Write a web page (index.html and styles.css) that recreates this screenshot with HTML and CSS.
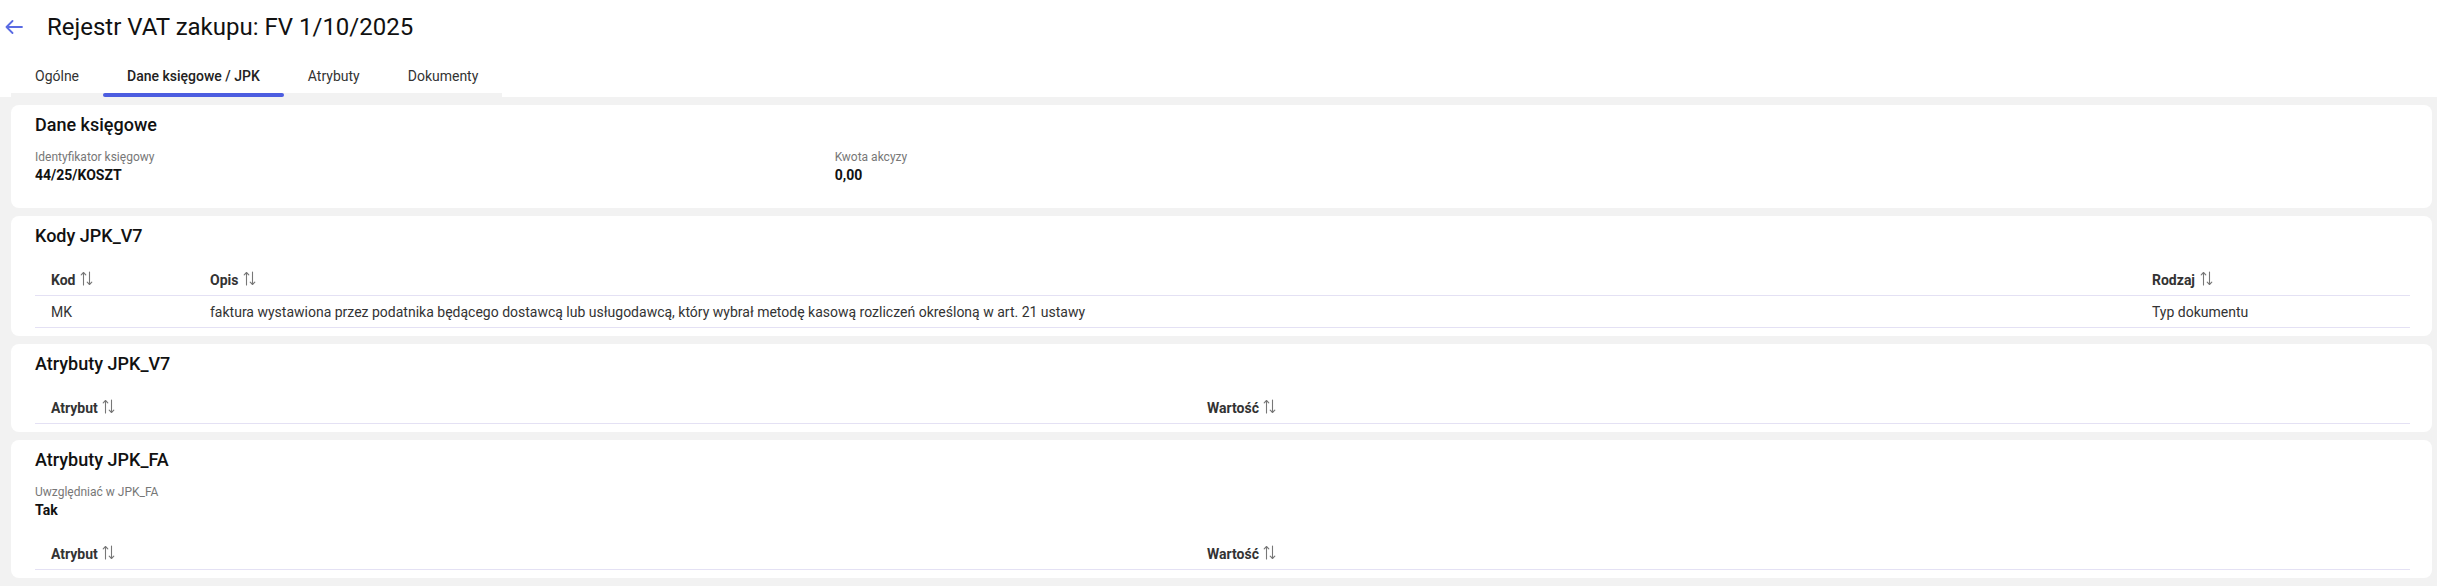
FILE: index.html
```html
<!DOCTYPE html>
<html lang="pl">
<head>
<meta charset="utf-8">
<title>Rejestr VAT zakupu</title>
<link rel="stylesheet" href="styles.css">
</head>
<body>
<header class="page-header">
  <div class="title-row">
    <button class="back-btn" aria-label="Wstecz">
      <svg width="18" height="14" viewBox="0 0 18 14" fill="none" stroke="currentColor" stroke-width="1.8" stroke-linecap="round" stroke-linejoin="round"><path d="M17 7H1.5M7.5 1L1.5 7l6 6"/></svg>
    </button>
    <h1 class="title">Rejestr VAT zakupu: FV 1/10/2025</h1>
  </div>
  <nav class="tabs">
    <div class="tab">Ogólne</div>
    <div class="tab tab-active">Dane księgowe / JPK</div>
    <div class="tab">Atrybuty</div>
    <div class="tab">Dokumenty</div>
  </nav>
</header>

<main class="content">
  <section class="card">
    <h2 class="card-title">Dane księgowe</h2>
    <div class="fields">
      <div class="field">
        <div class="field-label">Identyfikator księgowy</div>
        <div class="field-value">44/25/KOSZT</div>
      </div>
      <div class="field">
        <div class="field-label">Kwota akcyzy</div>
        <div class="field-value">0,00</div>
      </div>
    </div>
  </section>

  <section class="card">
    <h2 class="card-title">Kody JPK_V7</h2>
    <table class="grid">
      <thead>
        <tr>
          <th class="col-kod">Kod <span class="sort"><svg width="13" height="15" viewBox="0 0 13 15" fill="none" stroke="currentColor" stroke-width="1.1" stroke-linecap="round" stroke-linejoin="round"><path d="M3.5 14V1.5M1.2 3.8L3.5 1.5l2.3 2.3M9.5 1v12.5M7.2 11.2l2.3 2.3 2.3-2.3"/></svg></span></th>
          <th>Opis <span class="sort"><svg width="13" height="15" viewBox="0 0 13 15" fill="none" stroke="currentColor" stroke-width="1.1" stroke-linecap="round" stroke-linejoin="round"><path d="M3.5 14V1.5M1.2 3.8L3.5 1.5l2.3 2.3M9.5 1v12.5M7.2 11.2l2.3 2.3 2.3-2.3"/></svg></span></th>
          <th class="col-rodzaj">Rodzaj <span class="sort"><svg width="13" height="15" viewBox="0 0 13 15" fill="none" stroke="currentColor" stroke-width="1.1" stroke-linecap="round" stroke-linejoin="round"><path d="M3.5 14V1.5M1.2 3.8L3.5 1.5l2.3 2.3M9.5 1v12.5M7.2 11.2l2.3 2.3 2.3-2.3"/></svg></span></th>
        </tr>
      </thead>
      <tbody>
        <tr>
          <td>MK</td>
          <td>faktura wystawiona przez podatnika będącego dostawcą lub usługodawcą, który wybrał metodę kasową rozliczeń określoną w art. 21 ustawy</td>
          <td>Typ dokumentu</td>
        </tr>
      </tbody>
    </table>
  </section>

  <section class="card">
    <h2 class="card-title">Atrybuty JPK_V7</h2>
    <table class="grid">
      <thead>
        <tr>
          <th class="col-atrybut">Atrybut <span class="sort"><svg width="13" height="15" viewBox="0 0 13 15" fill="none" stroke="currentColor" stroke-width="1.1" stroke-linecap="round" stroke-linejoin="round"><path d="M3.5 14V1.5M1.2 3.8L3.5 1.5l2.3 2.3M9.5 1v12.5M7.2 11.2l2.3 2.3 2.3-2.3"/></svg></span></th>
          <th>Wartość <span class="sort"><svg width="13" height="15" viewBox="0 0 13 15" fill="none" stroke="currentColor" stroke-width="1.1" stroke-linecap="round" stroke-linejoin="round"><path d="M3.5 14V1.5M1.2 3.8L3.5 1.5l2.3 2.3M9.5 1v12.5M7.2 11.2l2.3 2.3 2.3-2.3"/></svg></span></th>
        </tr>
      </thead>
    </table>
  </section>

  <section class="card">
    <h2 class="card-title">Atrybuty JPK_FA</h2>
    <div class="fields">
      <div class="field">
        <div class="field-label">Uwzględniać w JPK_FA</div>
        <div class="field-value">Tak</div>
      </div>
    </div>
    <table class="grid">
      <thead>
        <tr>
          <th class="col-atrybut">Atrybut <span class="sort"><svg width="13" height="15" viewBox="0 0 13 15" fill="none" stroke="currentColor" stroke-width="1.1" stroke-linecap="round" stroke-linejoin="round"><path d="M3.5 14V1.5M1.2 3.8L3.5 1.5l2.3 2.3M9.5 1v12.5M7.2 11.2l2.3 2.3 2.3-2.3"/></svg></span></th>
          <th>Wartość <span class="sort"><svg width="13" height="15" viewBox="0 0 13 15" fill="none" stroke="currentColor" stroke-width="1.1" stroke-linecap="round" stroke-linejoin="round"><path d="M3.5 14V1.5M1.2 3.8L3.5 1.5l2.3 2.3M9.5 1v12.5M7.2 11.2l2.3 2.3 2.3-2.3"/></svg></span></th>
        </tr>
      </thead>
    </table>
  </section>
</main>
</body>
</html>
```

FILE: styles.css
```css
* { box-sizing: border-box; }

html, body {
  margin: 0;
  padding: 0;
  background: #ffffff;
  font-family: Roboto, "Liberation Sans", Arial, sans-serif;
  color: #333333;
}

.page-header {
  background: #ffffff;
}

.title-row {
  display: flex;
  align-items: center;
  padding-top: 11px;
  height: 43px;
}

.back-btn {
  display: flex;
  align-items: center;
  justify-content: center;
  width: 18px;
  height: 14px;
  margin-left: 5px;
  padding: 0;
  border: 0;
  background: transparent;
  color: #5a6be3;
}

.title {
  margin: 0 0 0 24px;
  font-size: 24px;
  line-height: 32px;
  font-weight: 400;
  color: #111111;
}

.tabs {
  display: inline-flex;
  margin: 12px 0 0 11px;
  border-bottom: 4px solid #f2f2f2;
}

.tab {
  position: relative;
  padding: 11px 24px 7px;
  font-size: 14px;
  line-height: 20px;
  color: #333333;
}

.tab-active {
  font-weight: 500;
  color: #222222;
}

.tab-active::after {
  content: "";
  position: absolute;
  left: 0;
  right: 0;
  bottom: -4px;
  height: 4px;
  border-radius: 2px;
  background: #4c5de0;
}

.content {
  background: #f2f2f2;
  padding: 8px 5px 8px 11px;
  display: flex;
  flex-direction: column;
  gap: 8px;
}

.card {
  background: #ffffff;
  border-radius: 8px;
  padding: 10px 22px 8px 24px;
}

.card-title {
  margin: 0;
  font-size: 18px;
  line-height: 20px;
  font-weight: 500;
  color: #111111;
}

.fields {
  display: grid;
  grid-template-columns: repeat(3, 1fr);
  column-gap: 24px;
  margin-top: 14px;
  margin-bottom: 15px;
}

.field-label {
  font-size: 12px;
  line-height: 16px;
  color: #777777;
}

.field-value {
  font-size: 14px;
  line-height: 20px;
  font-weight: 700;
  color: #111111;
}

.grid {
  width: 100%;
  margin-top: 16px;
  border-collapse: collapse;
  font-size: 14px;
  line-height: 20px;
}

.grid th {
  padding: 8px 16px 5px;
  text-align: left;
  font-weight: 700;
  color: #333333;
  border-bottom: 1px solid #e4e1f4;
  white-space: nowrap;
}

.grid td {
  padding: 6px 16px 5px;
  color: #333333;
  border-bottom: 1px solid #e4e1f4;
}

.col-kod { width: 159px; }
.col-rodzaj { width: 274px; }
.col-atrybut { width: 1156px; }

.sort {
  display: inline-block;
  vertical-align: -1px;
  margin-left: 1px;
  color: #777777;
  line-height: 0;
}
```
